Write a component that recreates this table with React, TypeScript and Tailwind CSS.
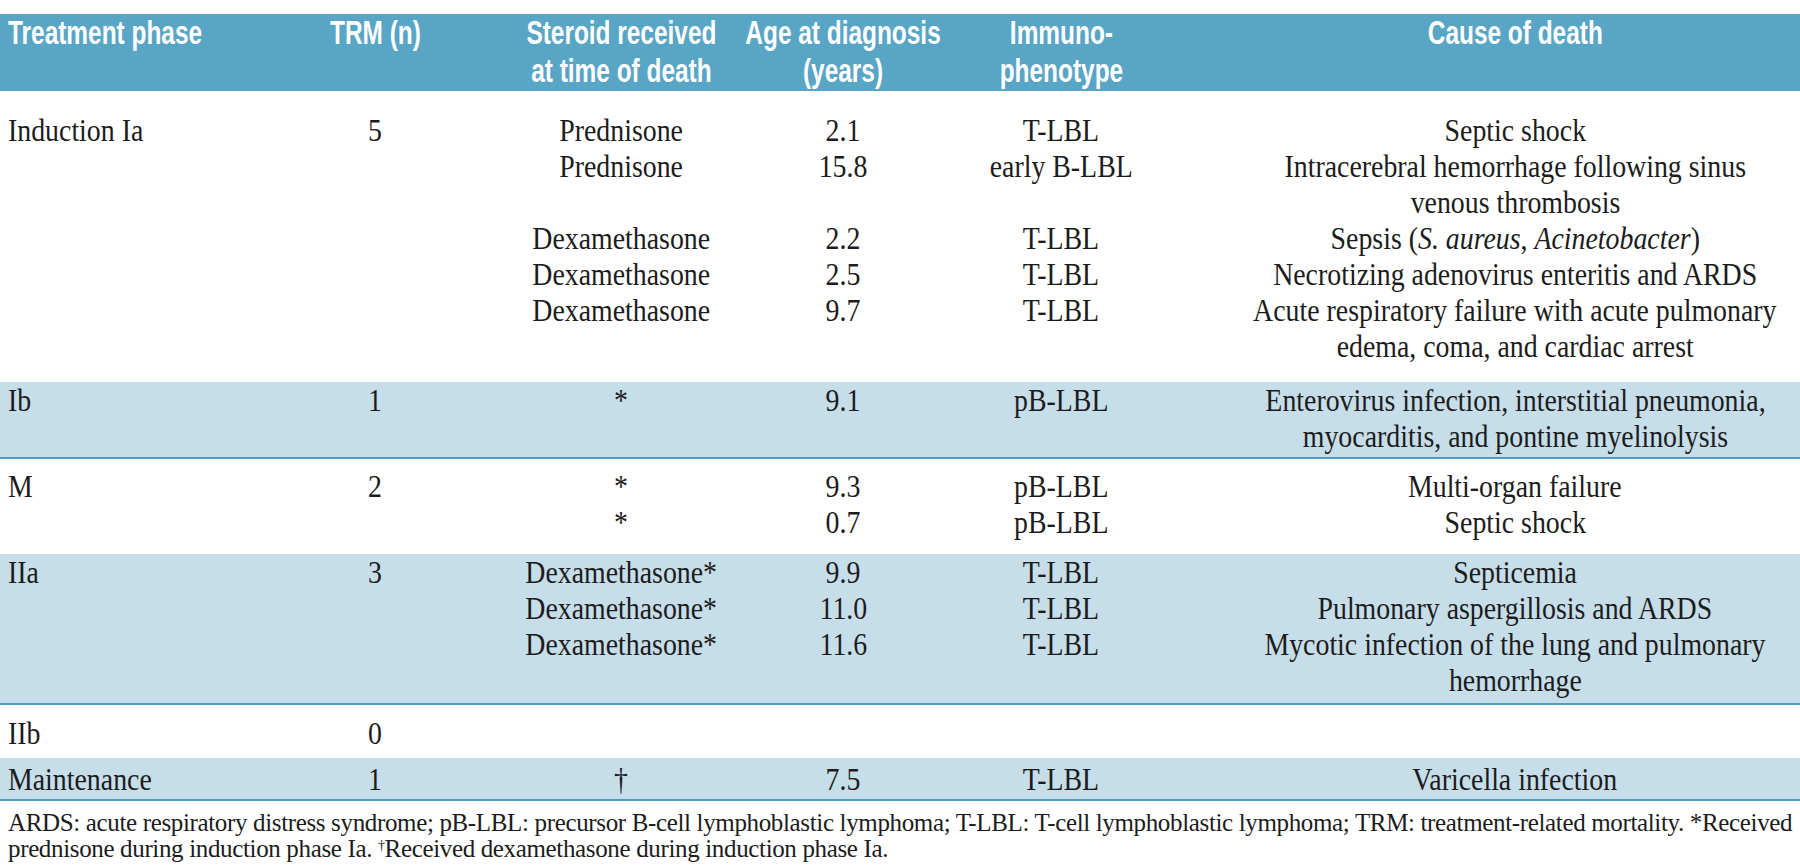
import type { ReactNode } from "react";

type Entry = {
  steroid: string;
  age: string;
  immuno: string;
  cause: ReactNode[];
};

type Group = {
  phase: string;
  n: string;
  shaded: boolean;
  pad: string;
  rows: Entry[];
};

const groups: Group[] = [
  {
    phase: "Induction Ia",
    n: "5",
    shaded: false,
    pad: "pt-[21px] pb-[18px]",
    rows: [
      { steroid: "Prednisone", age: "2.1", immuno: "T-LBL", cause: ["Septic shock"] },
      {
        steroid: "Prednisone",
        age: "15.8",
        immuno: "early B-LBL",
        cause: ["Intracerebral hemorrhage following sinus", "venous thrombosis"],
      },
      {
        steroid: "Dexamethasone",
        age: "2.2",
        immuno: "T-LBL",
        cause: [
          <>
            Sepsis (<i>S. aureus</i>, <i>Acinetobacter</i>)
          </>,
        ],
      },
      {
        steroid: "Dexamethasone",
        age: "2.5",
        immuno: "T-LBL",
        cause: ["Necrotizing adenovirus enteritis and ARDS"],
      },
      {
        steroid: "Dexamethasone",
        age: "9.7",
        immuno: "T-LBL",
        cause: ["Acute respiratory failure with acute pulmonary", "edema, coma, and cardiac arrest"],
      },
    ],
  },
  {
    phase: "Ib",
    n: "1",
    shaded: true,
    pad: "pt-0 pb-[3px]",
    rows: [
      {
        steroid: "*",
        age: "9.1",
        immuno: "pB-LBL",
        cause: ["Enterovirus infection, interstitial pneumonia,", "myocarditis, and pontine myelinolysis"],
      },
    ],
  },
  {
    phase: "M",
    n: "2",
    shaded: false,
    pad: "pt-[9px] pb-[14px]",
    rows: [
      { steroid: "*", age: "9.3", immuno: "pB-LBL", cause: ["Multi-organ failure"] },
      { steroid: "*", age: "0.7", immuno: "pB-LBL", cause: ["Septic shock"] },
    ],
  },
  {
    phase: "IIa",
    n: "3",
    shaded: true,
    pad: "pt-0 pb-[5px]",
    rows: [
      { steroid: "Dexamethasone*", age: "9.9", immuno: "T-LBL", cause: ["Septicemia"] },
      {
        steroid: "Dexamethasone*",
        age: "11.0",
        immuno: "T-LBL",
        cause: ["Pulmonary aspergillosis and ARDS"],
      },
      {
        steroid: "Dexamethasone*",
        age: "11.6",
        immuno: "T-LBL",
        cause: ["Mycotic infection of the lung and pulmonary", "hemorrhage"],
      },
    ],
  },
  {
    phase: "IIb",
    n: "0",
    shaded: false,
    pad: "pt-[10px] pb-[7px]",
    rows: [{ steroid: "", age: "", immuno: "", cause: [""] }],
  },
  {
    phase: "Maintenance",
    n: "1",
    shaded: true,
    pad: "pt-[3px] pb-[2px]",
    rows: [{ steroid: "†", age: "7.5", immuno: "T-LBL", cause: ["Varicella infection"] }],
  },
];

const cols = "grid grid-cols-[250px_250px_242px_202px_234px_minmax(0,1fr)]";

// the source table is set in condensed faces; squeeze the installed ones to match
function Body({ children, left }: { children: ReactNode; left?: boolean }) {
  return (
    <span
      className={`inline-block whitespace-nowrap scale-x-[0.87] min-h-[36px] ${
        left ? "origin-left" : "origin-center"
      }`}
    >
      {children}
    </span>
  );
}

function Head({ children, left }: { children: ReactNode; left?: boolean }) {
  return (
    <span
      className={`inline-block whitespace-nowrap text-center scale-x-[0.74] ${
        left ? "origin-left" : "origin-center"
      }`}
    >
      {children}
    </span>
  );
}

function HeaderRow() {
  return (
    <div
      className={`${cols} h-[77px] bg-[#58a5c6] text-white font-bold text-[33px] leading-[38px] font-['Liberation_Sans',sans-serif]`}
    >
      <div className="pl-2">
        <Head left>Treatment phase</Head>
      </div>
      <div className="flex justify-center">
        <Head>TRM (n)</Head>
      </div>
      <div className="flex justify-center">
        <Head>
          Steroid received
          <br />
          at time of death
        </Head>
      </div>
      <div className="flex justify-center">
        <Head>
          Age at diagnosis
          <br />
          (years)
        </Head>
      </div>
      <div className="flex justify-center">
        <Head>
          Immuno-
          <br />
          phenotype
        </Head>
      </div>
      <div className="flex justify-center pl-[52px]">
        <Head>Cause of death</Head>
      </div>
    </div>
  );
}

function GroupBlock({ group }: { group: Group }) {
  return (
    <div
      className={`${group.pad} ${
        group.shaded ? "bg-[#c6deea] border-b-2 border-[#4d9dc4]" : "bg-white"
      }`}
    >
      {group.rows.map((row, i) => (
        <div key={i} className={`${cols} leading-[36px]`}>
          <div className="pl-2">{i === 0 && <Body left>{group.phase}</Body>}</div>
          <div className="flex justify-center">{i === 0 && <Body>{group.n}</Body>}</div>
          <div className="flex justify-center">
            <Body>{row.steroid}</Body>
          </div>
          <div className="flex justify-center">
            <Body>{row.age}</Body>
          </div>
          <div className="flex justify-center">
            <Body>{row.immuno}</Body>
          </div>
          <div className="pl-[52px] flex flex-col items-center">
            {row.cause.map((line, j) => (
              <Body key={j}>{line}</Body>
            ))}
          </div>
        </div>
      ))}
    </div>
  );
}

export default function App() {
  return (
    <div className="w-[1800px] h-[866px] bg-white pt-[14px] overflow-hidden text-[#1c1c1c] font-['Liberation_Serif',serif] text-[32px]">
      <HeaderRow />
      {groups.map((g) => (
        <GroupBlock key={g.phase} group={g} />
      ))}
      <p className="pl-2 pt-[9px] text-[25px] leading-[26px] tracking-[-0.35px] whitespace-nowrap">
        ARDS: acute respiratory distress syndrome; pB-LBL: precursor B-cell lymphoblastic lymphoma; T-LBL: T-cell
        lymphoblastic lymphoma; TRM: treatment-related mortality. *Received
        <br />
        prednisone during induction phase Ia. <sup className="text-[14px]">†</sup>Received dexamethasone during
        induction phase Ia.
      </p>
    </div>
  );
}
